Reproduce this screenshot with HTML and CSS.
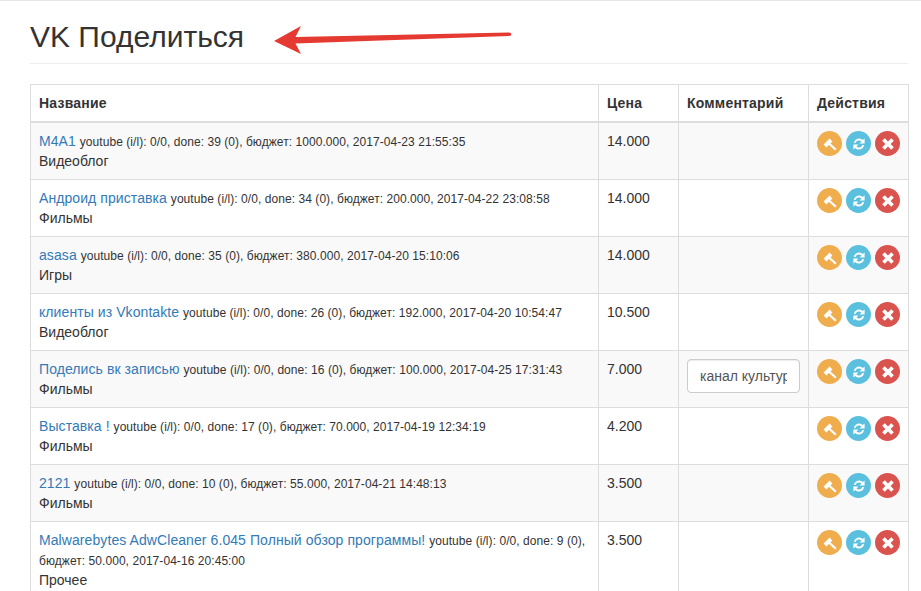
FILE: index.html
```html
<!DOCTYPE html>
<html lang="ru">
<head>
<meta charset="utf-8">
<title>VK Поделиться</title>
<link rel="stylesheet" href="styles.css">
</head>
<body>
<svg width="0" height="0" class="defs">
  <symbol id="i-gavel" viewBox="0 0 14 14"><path d="M0.6 7.6 6.6 1.6 9.4 4.4 3.4 10.4ZM6.5 5.5 13.6 12 12 13.6 5 7Z" fill="#fff"/></symbol>
  <symbol id="i-refresh" viewBox="0 0 14 14"><path d="M1.8 5.8A5.4 5.4 0 0 1 10.8 3L12.6 1.4V6.4H7.6L9.5 4.4A3.6 3.6 0 0 0 3.6 6ZM12.2 8.2A5.4 5.4 0 0 1 3.2 11L1.4 12.6V7.6H6.4L4.5 9.6A3.6 3.6 0 0 0 10.4 8Z" fill="#fff"/></symbol>
  <symbol id="i-remove" viewBox="0 0 14 14"><path d="M3.8 1.2 7 4.4 10.2 1.2 12.8 3.8 9.6 7 12.8 10.2 10.2 12.8 7 9.6 3.8 12.8 1.2 10.2 4.4 7 1.2 3.8Z" fill="#fff"/></symbol>
</svg>
<div class="container">
  <div class="page-header"><h2>VK Поделиться</h2></div>
  <table class="grid">
    <colgroup><col class="c-name"><col class="c-price"><col class="c-comment"><col class="c-actions"></colgroup>
    <thead><tr><th>Название</th><th>Цена</th><th>Комментарий</th><th>Действия</th></tr></thead>
    <tbody>
      <tr><td><a href="#">M4A1</a> <small>youtube (i/l): 0/0, done: 39 (0), бюджет: 1000.000, 2017-04-23 21:55:35</small><br>Видеоблог</td><td>14.000</td><td></td><td><div class="acts"><a class="b warn"><svg><use href="#i-gavel"/></svg></a><a class="b info"><svg><use href="#i-refresh"/></svg></a><a class="b dang"><svg><use href="#i-remove"/></svg></a></div></td></tr>
      <tr><td><a href="#">Андроид приставка</a> <small>youtube (i/l): 0/0, done: 34 (0), бюджет: 200.000, 2017-04-22 23:08:58</small><br>Фильмы</td><td>14.000</td><td></td><td><div class="acts"><a class="b warn"><svg><use href="#i-gavel"/></svg></a><a class="b info"><svg><use href="#i-refresh"/></svg></a><a class="b dang"><svg><use href="#i-remove"/></svg></a></div></td></tr>
      <tr><td><a href="#">asasa</a> <small>youtube (i/l): 0/0, done: 35 (0), бюджет: 380.000, 2017-04-20 15:10:06</small><br>Игры</td><td>14.000</td><td></td><td><div class="acts"><a class="b warn"><svg><use href="#i-gavel"/></svg></a><a class="b info"><svg><use href="#i-refresh"/></svg></a><a class="b dang"><svg><use href="#i-remove"/></svg></a></div></td></tr>
      <tr><td><a href="#">клиенты из Vkontakte</a> <small>youtube (i/l): 0/0, done: 26 (0), бюджет: 192.000, 2017-04-20 10:54:47</small><br>Видеоблог</td><td>10.500</td><td></td><td><div class="acts"><a class="b warn"><svg><use href="#i-gavel"/></svg></a><a class="b info"><svg><use href="#i-refresh"/></svg></a><a class="b dang"><svg><use href="#i-remove"/></svg></a></div></td></tr>
      <tr><td><a href="#">Поделись вк записью</a> <small>youtube (i/l): 0/0, done: 16 (0), бюджет: 100.000, 2017-04-25 17:31:43</small><br>Фильмы</td><td>7.000</td><td><input class="field" type="text" value="канал культуры"></td><td><div class="acts"><a class="b warn"><svg><use href="#i-gavel"/></svg></a><a class="b info"><svg><use href="#i-refresh"/></svg></a><a class="b dang"><svg><use href="#i-remove"/></svg></a></div></td></tr>
      <tr><td><a href="#">Выставка !</a> <small>youtube (i/l): 0/0, done: 17 (0), бюджет: 70.000, 2017-04-19 12:34:19</small><br>Фильмы</td><td>4.200</td><td></td><td><div class="acts"><a class="b warn"><svg><use href="#i-gavel"/></svg></a><a class="b info"><svg><use href="#i-refresh"/></svg></a><a class="b dang"><svg><use href="#i-remove"/></svg></a></div></td></tr>
      <tr><td><a href="#">2121</a> <small>youtube (i/l): 0/0, done: 10 (0), бюджет: 55.000, 2017-04-21 14:48:13</small><br>Фильмы</td><td>3.500</td><td></td><td><div class="acts"><a class="b warn"><svg><use href="#i-gavel"/></svg></a><a class="b info"><svg><use href="#i-refresh"/></svg></a><a class="b dang"><svg><use href="#i-remove"/></svg></a></div></td></tr>
      <tr><td><a href="#">Malwarebytes AdwCleaner 6.045 Полный обзор программы!</a> <small>youtube (i/l): 0/0, done: 9 (0), бюджет: 50.000, 2017-04-16 20:45:00</small><br>Прочее</td><td>3.500</td><td></td><td><div class="acts"><a class="b warn"><svg><use href="#i-gavel"/></svg></a><a class="b info"><svg><use href="#i-refresh"/></svg></a><a class="b dang"><svg><use href="#i-remove"/></svg></a></div></td></tr>
    </tbody>
  </table>
</div>
<svg class="arrow" width="246" height="40" viewBox="0 0 246 40"><path d="M4 21 31 6 25.5 17 239 12.6C242 12.6 242 16 239 16L25.5 23.5 31 34Z" fill="#e53a31"/></svg>
</body>
</html>
```
FILE: styles.css
```css
* { box-sizing: border-box; }
html, body { margin: 0; height: 591px; overflow: hidden; }
body {
  position: relative;
  font-family: "Liberation Sans", Arial, sans-serif;
  font-size: 14px;
  line-height: 20px;
  color: #333;
  background: #fff;
  border-top: 1px solid #e7e7e7;
}
.defs { position: absolute; }
.container { padding: 0 13px 0 30px; }
.page-header { border-bottom: 1px solid #eee; padding-bottom: 9px; margin-bottom: 20px; margin-top: 19px; height: 44px; }
h2 { margin: 0; font-size: 30px; font-weight: 500; line-height: 33px; }
.grid { width: 878px; table-layout: fixed; border-collapse: collapse; border: 1px solid #ddd; }
.c-name { width: 568px; }
.c-price { width: 80px; }
.c-comment { width: 130px; }
.c-actions { width: 100px; }
th, td { padding: 8px; border: 1px solid #ddd; text-align: left; vertical-align: top; }
th { border-bottom: 2px solid #ddd; font-weight: 700; letter-spacing: .2px; }
tbody tr:nth-child(odd) { background: #f9f9f9; }
a { color: #337ab7; text-decoration: none; letter-spacing: .08px; }
small { font-size: 12px; line-height: 1; letter-spacing: .06px; }
.acts { display: flex; gap: 4px; }
.b { width: 25px; height: 25px; border-radius: 50%; display: flex; align-items: center; justify-content: center; }
.b svg { width: 14px; height: 14px; }
.warn { background: #f0ad4e; }
.info { background: #5bc0de; }
.dang { background: #d9534f; }
.field {
  display: block; width: 113px; height: 34px; padding: 6px 12px;
  font: 14px/20px "Liberation Sans", Arial, sans-serif; color: #555;
  background: #fff; border: 1px solid #ccc; border-radius: 4px;
  box-shadow: inset 0 1px 1px rgba(0,0,0,.075);
}
.arrow { position: absolute; left: 270px; top: 19px; }
```
